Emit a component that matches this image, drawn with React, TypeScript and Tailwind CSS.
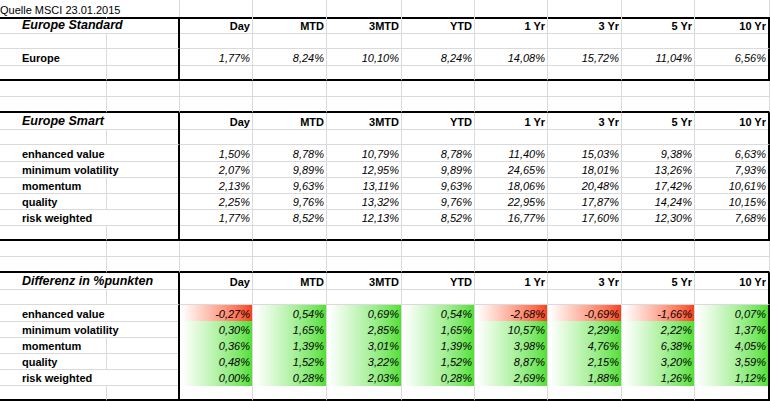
const COLS =
  "grid grid-cols-[107px_73px_73px_74px_75px_73px_73px_74px_73px_75px]";

const headers = ["Day", "MTD", "3MTD", "YTD", "1 Yr", "3 Yr", "5 Yr", "10 Yr"];

const standard = [
  ["Europe", "1,77%", "8,24%", "10,10%", "8,24%", "14,08%", "15,72%", "11,04%", "6,56%"],
];

const smart = [
  ["enhanced value", "1,50%", "8,78%", "10,79%", "8,78%", "11,40%", "15,03%", "9,38%", "6,63%"],
  ["minimum volatility", "2,07%", "9,89%", "12,95%", "9,89%", "24,65%", "18,01%", "13,26%", "7,93%"],
  ["momentum", "2,13%", "9,63%", "13,11%", "9,63%", "18,06%", "20,48%", "17,42%", "10,61%"],
  ["quality", "2,25%", "9,76%", "13,32%", "9,76%", "22,95%", "17,87%", "14,24%", "10,15%"],
  ["risk weighted", "1,77%", "8,52%", "12,13%", "8,52%", "16,77%", "17,60%", "12,30%", "7,68%"],
];

const diff = [
  ["enhanced value", "-0,27%", "0,54%", "0,69%", "0,54%", "-2,68%", "-0,69%", "-1,66%", "0,07%"],
  ["minimum volatility", "0,30%", "1,65%", "2,85%", "1,65%", "10,57%", "2,29%", "2,22%", "1,37%"],
  ["momentum", "0,36%", "1,39%", "3,01%", "1,39%", "3,98%", "4,76%", "6,38%", "4,05%"],
  ["quality", "0,48%", "1,52%", "3,22%", "1,52%", "8,87%", "2,15%", "3,20%", "3,59%"],
  ["risk weighted", "0,00%", "0,28%", "2,03%", "0,28%", "2,69%", "1,88%", "1,26%", "1,12%"],
];

// labels that run past column A hide its gridline
const wide = ["enhanced value", "minimum volatility", "risk weighted"];

type RowProps = {
  label?: string;
  title?: string;
  note?: string;
  cells?: string[];
  header?: boolean;
  table?: boolean;
  thick?: boolean;
  fill?: boolean;
  tall?: boolean;
};

const Row = ({ label, title, note, cells, header, table, thick, fill, tall }: RowProps) => {
  const bottom = thick ? "border-b-2 border-b-black" : "border-b border-b-[#dadada]";
  const merge = !!title || !!note || (label ? wide.includes(label) : false);

  return (
    <div className={`${COLS} ${tall ? "h-[17px]" : "h-[16px]"}`}>
      <div
        className={`${bottom} border-r ${merge ? "border-r-transparent" : "border-r-[#dadada]"} whitespace-nowrap overflow-visible`}
      >
        {note && <div className="pt-[3px] leading-[14px] text-[11px] text-black">{note}</div>}
        {title && (
          <div className="pl-[22px] pt-[1px] leading-[14px] text-[12.5px] font-bold italic text-black">
            {title}
          </div>
        )}
        {label && (
          <div className="pl-[22px] pt-[2px] leading-[14px] text-[11px] font-bold text-black">
            {label}
          </div>
        )}
      </div>
      <div
        className={`${bottom} ${table ? "border-r-2 border-r-black" : "border-r border-r-[#dadada]"}`}
      />
      {Array.from({ length: 8 }).map((_, i) => {
        const v = cells ? cells[i] : header ? headers[i] : "";
        const last = i === 7;
        const right = last && table ? "border-r-2 border-r-black" : "border-r border-r-[#dadada]";
        if (fill && v) {
          const neg = v.startsWith("-");
          return (
            <div key={i} className={`${right} pl-[2px]`}>
              <div
                className={`h-full bg-linear-to-r from-white ${neg ? "to-[#f7421b]" : "to-[#52e032]"} pr-[2px] pt-[2px] text-right leading-[14px] text-[11px] italic text-black`}
              >
                {v}
              </div>
            </div>
          );
        }
        return (
          <div
            key={i}
            className={`${bottom} ${right} pr-[2px] pt-[2px] text-right leading-[14px] text-[11px] text-black ${header ? "font-bold" : "italic"}`}
          >
            {v}
          </div>
        );
      })}
    </div>
  );
};

const App = () => {
  return (
    <main className="w-[770px] h-[401px] overflow-hidden bg-white font-['Liberation_Sans',Arial,sans-serif]">
      <Row note="Quelle MSCI 23.01.2015" tall thick />

      <Row title="Europe Standard" header table />
      <Row table />
      {standard.map((r) => (
        <Row key={r[0]} label={r[0]} cells={r.slice(1)} table />
      ))}
      <Row table thick />

      <Row />
      <Row thick />

      <Row title="Europe Smart" header table />
      <Row table />
      {smart.map((r) => (
        <Row key={r[0]} label={r[0]} cells={r.slice(1)} table />
      ))}
      <Row table thick />

      <Row />
      <Row thick />

      <Row title="Differenz in %punkten" header table />
      <Row table />
      {diff.map((r) => (
        <Row key={r[0]} label={r[0]} cells={r.slice(1)} table fill />
      ))}
      <Row table thick />
    </main>
  );
};

export default App;
